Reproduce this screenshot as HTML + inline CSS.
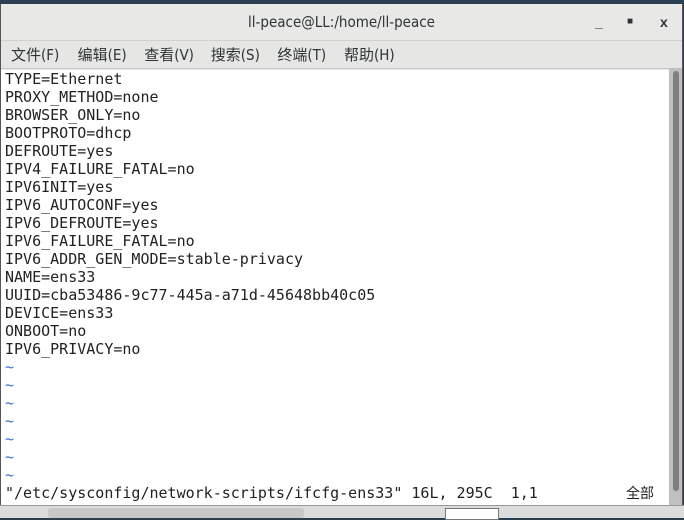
<!DOCTYPE html><html><head><style>
body{margin:0;width:684px;height:517px;overflow:hidden;background:#2a3f4f;position:relative;font-family:"DejaVu Sans Mono","Liberation Mono",monospace}
.win{position:absolute;left:0;top:4px;width:683px;height:501px;background:#e8e8e7;border-left:1px solid #555;border-right:1px solid #555;box-sizing:border-box}
.title{position:absolute;top:0;left:0;right:0;height:36px;text-align:center;font:15px "DejaVu Sans Condensed","Liberation Sans",sans-serif;line-height:36px;color:#2e3436}
.menu{position:absolute;top:36px;left:0;right:0;height:29px;background:#e6e6e5;border-top:1px solid #d0d0d0;border-bottom:1px solid #c8c8c8;font:15px "DejaVu Sans Condensed","Noto Sans CJK SC",sans-serif;line-height:28px;color:#2e3436;padding-left:10px;box-sizing:border-box}
.menu span{display:inline-block;width:66.6px}
.term{position:absolute;top:66px;left:0;width:669px;height:435px;background:#fff}
pre{margin:0;padding:0 0 0 4px;font:15px "DejaVu Sans Mono",monospace;line-height:18px;color:#222;overflow:hidden}
.t{color:#3a6fd6}
.sb{position:absolute;top:68px;left:669px;width:13px;height:437px;background:#c0c0c0}
.th{position:absolute;top:3px;left:4px;width:6px;height:420px;background:#7f7f7f;border-radius:3px}
.ctl{position:absolute;top:0;height:36px;font:bold 14px sans-serif;line-height:36px;color:#2e3436}
.task{position:absolute;top:505px;left:0;width:684px;height:12px;background:#dcdcdc;border-top:1px solid #999}
</style></head><body>
<div class="win">
<div class="title">ll-peace@LL:/home/ll-peace</div>
<div class="ctl" style="left:594px">_</div>
<div class="ctl" style="left:626px;font-size:10px">■</div>
<div class="ctl" style="left:659px">x</div>
<div class="menu"><span>文件(F)</span><span>编辑(E)</span><span>查看(V)</span><span>搜索(S)</span><span>终端(T)</span><span>帮助(H)</span></div>
<div class="term"><pre>TYPE=Ethernet
PROXY_METHOD=none
BROWSER_ONLY=no
BOOTPROTO=dhcp
DEFROUTE=yes
IPV4_FAILURE_FATAL=no
IPV6INIT=yes
IPV6_AUTOCONF=yes
IPV6_DEFROUTE=yes
IPV6_FAILURE_FATAL=no
IPV6_ADDR_GEN_MODE=stable-privacy
NAME=ens33
UUID=cba53486-9c77-445a-a71d-45648bb40c05
DEVICE=ens33
ONBOOT=no
IPV6_PRIVACY=no
<span class="t">~
~
~
~
~
~
~</span>
"/etc/sysconfig/network-scripts/ifcfg-ens33" 16L, 295C  1,1</pre>
<div style="position:absolute;left:625px;top:414px;font:14px 'Noto Sans CJK SC',sans-serif;line-height:18px;color:#222">全部</div></div>
</div>
<div class="sb"><div class="th"></div></div>
<div class="task"><div style="position:absolute;left:48px;top:2px;width:256px;height:10px;background:#c8c8c8;border-radius:3px"></div><div style="position:absolute;left:445px;top:2px;width:52px;height:10px;background:#fff;border:1px solid #777"></div></div>
</body></html>
